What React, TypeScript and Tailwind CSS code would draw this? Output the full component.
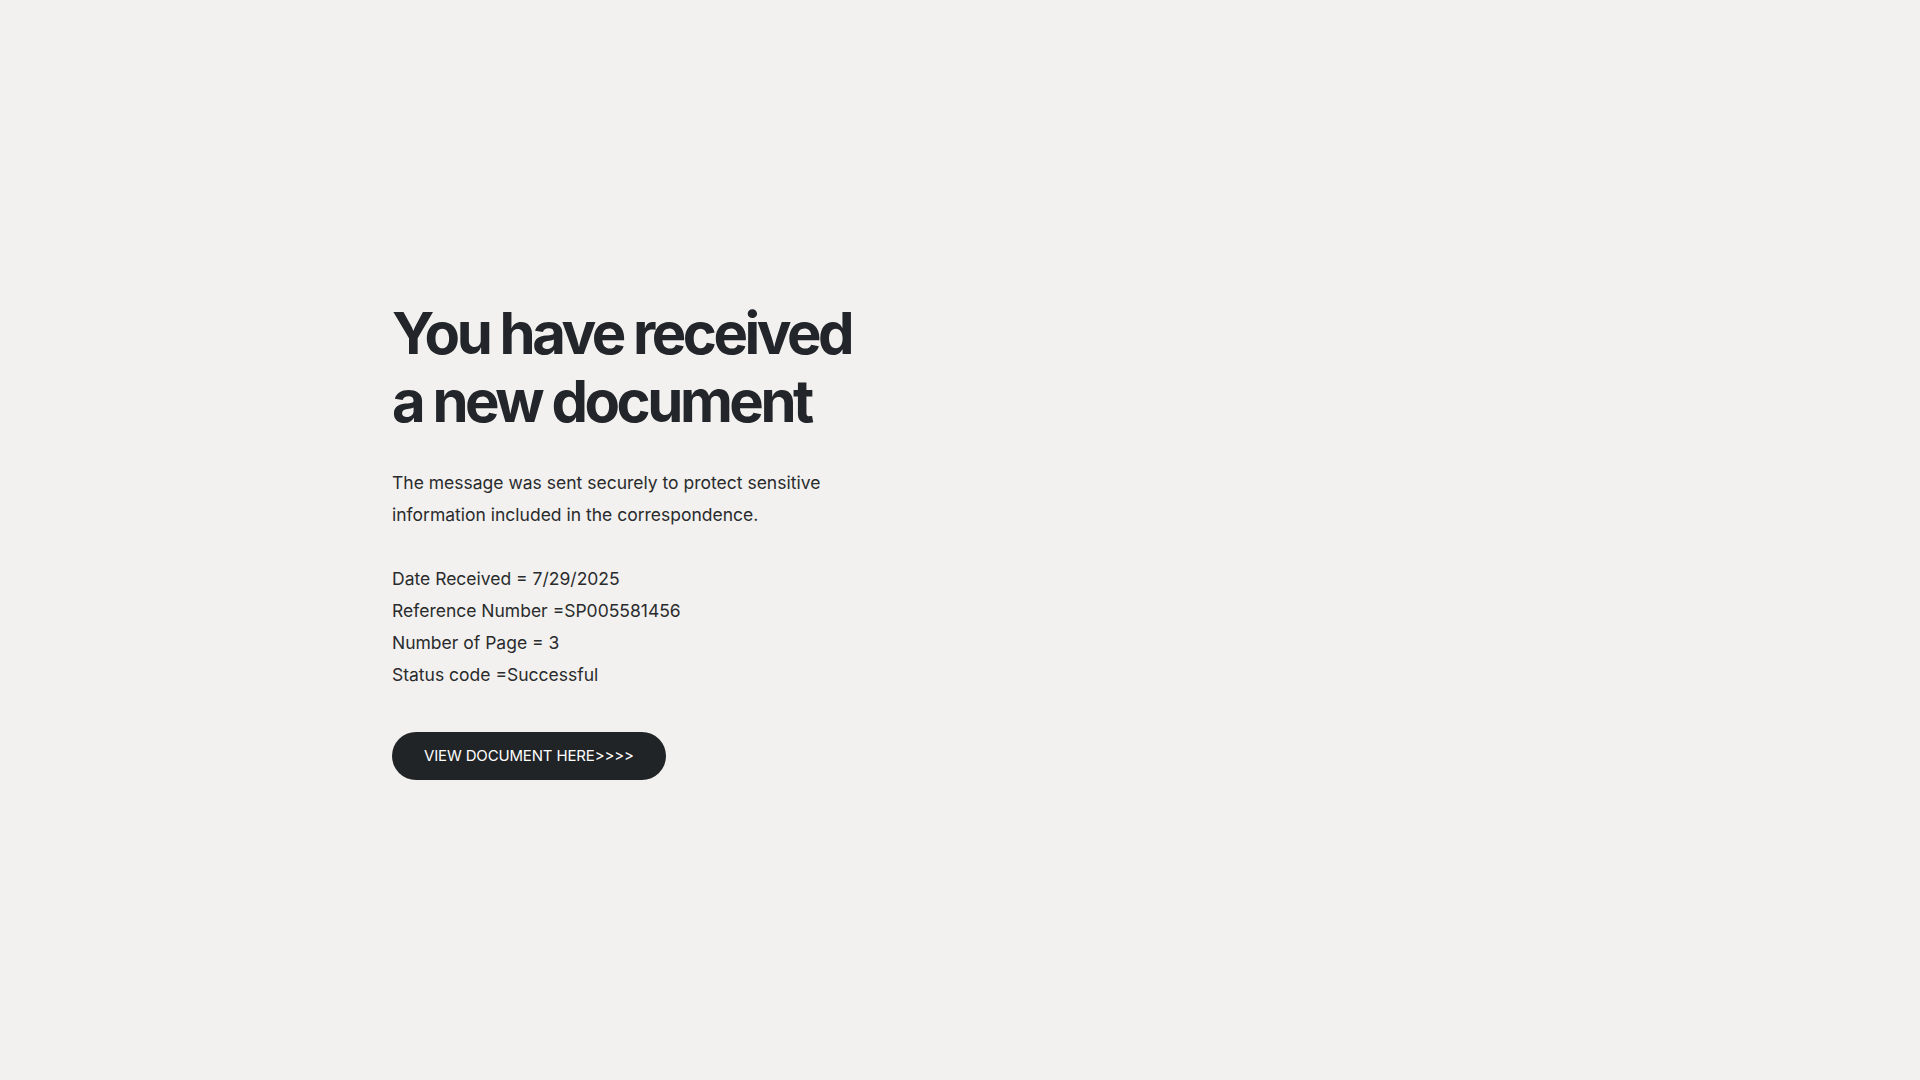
export default function App() {
  const details = [
    'Date Received = 7/29/2025',
    'Reference Number =SP005581456',
    'Number of Page = 3',
    'Status code =Successful',
  ]

  return (
    <div
      className="min-h-[1230px] w-full bg-[#f2f1ef] text-[#212427]"
      style={{ fontFamily: 'Inter, "Noto Sans", sans-serif' }}
    >
      <main className="mx-auto max-w-[1136px] pt-[299px]">
        <div className="flex flex-col items-start">
          <h1 className="text-[58px] font-bold leading-[68px] tracking-[-0.06em] text-[#222529]">
            You have received
            <br />
            a new document
          </h1>

          <div className="mt-[32px] text-[17.5px] leading-[32px] text-[#2a2b2d]">
            <p>
              The message was sent securely to protect sensitive
              <br />
              information included in the correspondence.
            </p>
            <div className="mt-[32px]">
              {details.map((line) => (
                <p key={line}>{line}</p>
              ))}
            </div>
          </div>

          <button className="mt-[41px] flex h-[48px] items-center rounded-full bg-[#212427] px-8 text-[15px] tracking-[-0.01em] text-white">
            VIEW DOCUMENT HERE&gt;&gt;&gt;&gt;
          </button>
        </div>
      </main>
    </div>
  )
}
